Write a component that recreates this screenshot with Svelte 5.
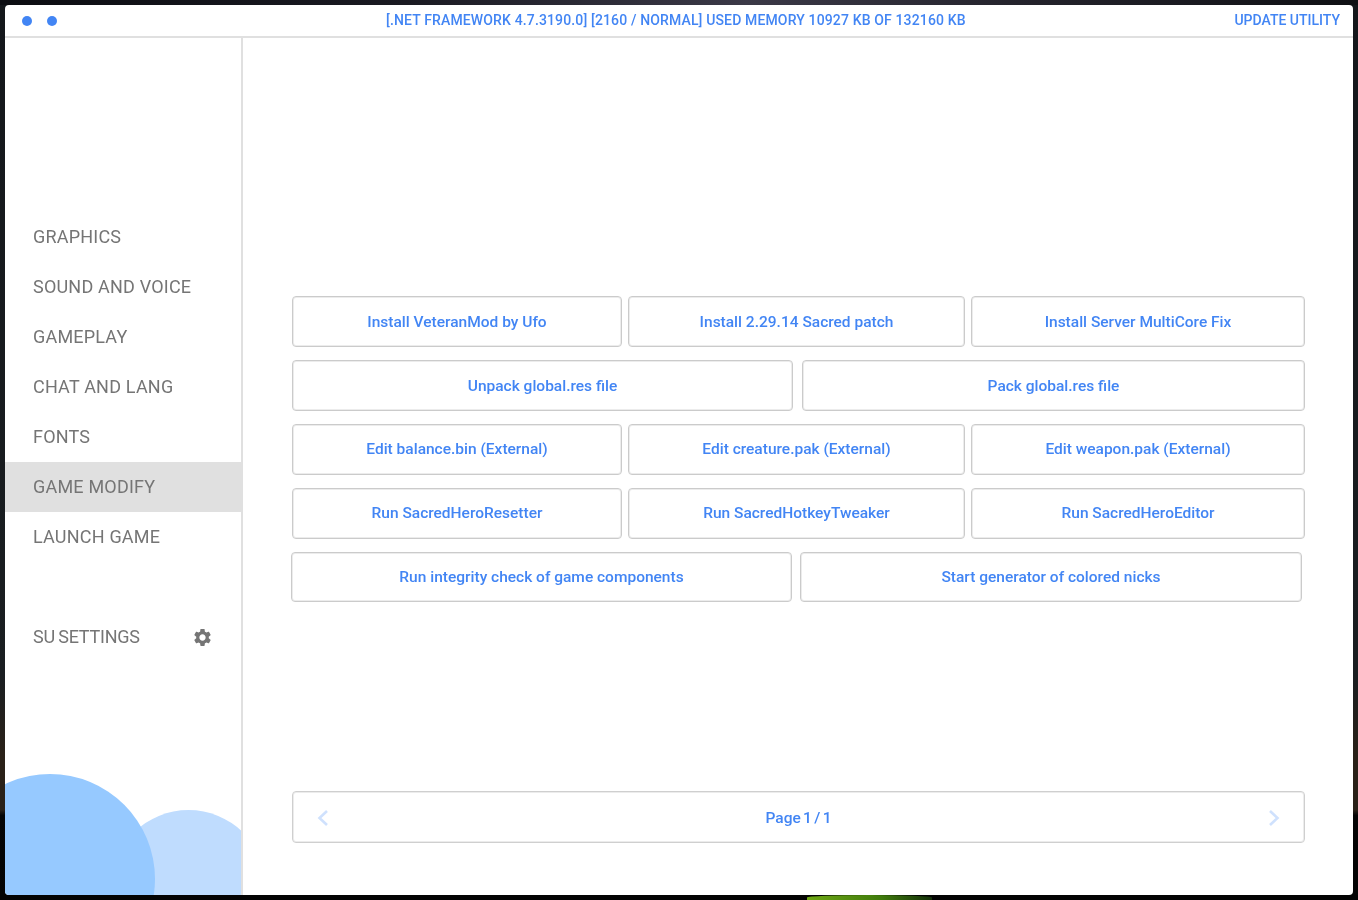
<script>
  const nav = ['GRAPHICS', 'SOUND AND VOICE', 'GAMEPLAY', 'CHAT AND LANG', 'FONTS', 'GAME MODIFY', 'LAUNCH GAME'];
  const rows = [
    { cls: 'three', items: ['Install VeteranMod by Ufo', 'Install 2.29.14 Sacred patch', 'Install Server MultiCore Fix'] },
    { cls: 'two', items: ['Unpack global.res file', 'Pack global.res file'] },
    { cls: 'three lift', items: ['Edit balance.bin (External)', 'Edit creature.pak (External)', 'Edit weapon.pak (External)'] },
    { cls: 'three lift', items: ['Run SacredHeroResetter', 'Run SacredHotkeyTweaker', 'Run SacredHeroEditor'] },
    { cls: 'two last', items: ['Run integrity check of game components', 'Start generator of colored nicks'] }
  ];
</script>

<div class="backdrop" aria-hidden="true"><span class="leaf"></span></div>
<div class="window">
  <header class="bar">
    <div class="dots"><span></span><span></span></div>
    <div class="info">[.NET FRAMEWORK 4.7.3190.0] [2160 / NORMAL] USED MEMORY 10927 KB OF 132160 KB</div>
    <div class="update">UPDATE UTILITY</div>
  </header>
  <div class="body">
    <aside class="side">
      <nav>
        {#each nav as item}
          <div class="item" class:active={item === 'GAME MODIFY'}>{item}</div>
        {/each}
      </nav>
      <div class="item settings">
        <span class="su">SU SETTINGS</span>
        <svg class="gear" width="21" height="21" viewBox="0 0 24 24" fill="#757575"><path fill-rule="evenodd" d="M19.14 12.94c.04-.3.06-.61.06-.94 0-.32-.02-.64-.07-.94l2.03-1.58c.18-.14.23-.41.12-.61l-1.92-3.32c-.12-.22-.37-.29-.59-.22l-2.39.96c-.5-.38-1.03-.7-1.62-.94L14.4 2.81c-.04-.24-.24-.41-.48-.41h-3.84c-.24 0-.43.17-.47.41L9.25 5.35c-.59.24-1.13.57-1.62.94l-2.39-.96c-.22-.08-.47 0-.59.22L2.74 8.87c-.12.21-.08.47.12.61l2.03 1.58c-.05.3-.09.63-.09.94s.02.64.07.94l-2.03 1.58c-.18.14-.23.41-.12.61l1.92 3.32c.12.22.37.29.59.22l2.39-.96c.5.38 1.03.7 1.62.94l.36 2.54c.05.24.24.41.48.41h3.84c.24 0 .44-.17.47-.41l.36-2.54c.59-.24 1.13-.56 1.62-.94l2.39.96c.22.08.47 0 .59-.22l1.92-3.32c.12-.22.07-.47-.12-.61l-2.01-1.58zM12 15.6c-1.98 0-3.6-1.62-3.6-3.6s1.62-3.6 3.6-3.6 3.6 1.62 3.6 3.6-1.62 3.6-3.6 3.6z"/></svg>
      </div>
      <div class="circle small"></div>
      <div class="circle big"></div>
    </aside>
    <main class="main">
      {#each rows as row}
        <div class="row {row.cls}">
          {#each row.items as label}
            <button class="btn">{label}</button>
          {/each}
        </div>
      {/each}
      <div class="pager">
        <svg width="14" height="18" viewBox="0 0 14 18" fill="none" stroke="#cfe1fd" stroke-width="2.6"><path d="M11 2 3.5 9l7.5 7"/></svg>
        <span class="page">Page 1 / 1</span>
        <svg width="14" height="18" viewBox="0 0 14 18" fill="none" stroke="#cfe1fd" stroke-width="2.6"><path d="M3 2l7.5 7L3 16"/></svg>
      </div>
    </main>
  </div>
</div>

<style>
  :global(body) {
    margin: 0;
    background: #050506;
    font-family: Roboto, "Liberation Sans", sans-serif;
  }
  .backdrop {
    position: fixed;
    inset: 0;
    background:
      linear-gradient(90deg, #0c0d12 0%, #1a1a22 30%, #3b3947 55%, #24232c 75%, #0f1014 100%) top / 100% 5px no-repeat,
      linear-gradient(180deg, #14171b 0%, #1a1e21 75%, #2a2118 84%, #2a2118 90%, #050505 90.6%, #030303 100%);
  }
  .leaf {
    position: absolute;
    left: 807px;
    bottom: 0;
    width: 125px;
    height: 5px;
    background: linear-gradient(90deg, #6fa814, #3f7a0c 60%, #14300a);
    border-radius: 60% 60% 0 0;
  }
  .window {
    position: relative;
    margin: 5px;
    width: 1348px;
    height: 890px;
    background: #fff;
    border-radius: 4px;
    overflow: hidden;
    display: flex;
    flex-direction: column;
    box-sizing: border-box;
  }
  .bar {
    flex: none;
    height: 33px;
    box-sizing: border-box;
    border-bottom: 2px solid #e0e0e0;
    display: grid;
    grid-template-columns: 381px 1fr auto;
    align-items: center;
    padding-right: 13px;
    color: #4285f4;
    font-size: 14px;
    font-weight: 500;
  }
  .info {
    letter-spacing: 0.14px;
    padding-bottom: 2px;
  }
  .update {
    padding-bottom: 2px;
  }
  .dots {
    display: flex;
    gap: 15px;
    padding-left: 17px;
  }
  .dots span {
    width: 10px;
    height: 10px;
    border-radius: 50%;
    background: #4285f4;
  }
  .body {
    flex: 1;
    display: flex;
    min-height: 0;
  }
  .side {
    position: relative;
    flex: none;
    width: 238px;
    box-sizing: border-box;
    border-right: 2px solid #e0e0e0;
    padding-top: 174px;
    overflow: hidden;
  }
  .item {
    height: 50px;
    display: flex;
    align-items: center;
    padding: 0 0 2px 28px;
    box-sizing: border-box;
    color: #757575;
    font-size: 18px;
    letter-spacing: 0.2px;
  }
  .item.active {
    background: #e0e0e0;
  }
  .settings {
    margin-top: 50px;
    justify-content: space-between;
    padding-right: 28px;
  }
  .su {
    letter-spacing: -0.22px;
    word-spacing: -1px;
  }
  .gear {
    margin-top: 2px;
  }
  .circle {
    position: absolute;
    border-radius: 50%;
  }
  .big {
    width: 210px;
    height: 210px;
    left: -60px;
    top: 736px;
    background: #96c9ff;
  }
  .small {
    width: 155px;
    height: 155px;
    left: 106px;
    top: 772px;
    background: #bfdcfe;
  }
  .main {
    flex: 1;
    padding: 258px 0 0 49px;
    box-sizing: border-box;
  }
  .row {
    display: grid;
    width: 1013px;
    height: 51px;
    margin-bottom: 13px;
  }
  .three {
    grid-template-columns: 330px 337px 334px;
    column-gap: 6px;
  }
  .two {
    grid-template-columns: 501px 503px;
    column-gap: 9px;
  }
  .last {
    grid-template-columns: 501px 502px;
    column-gap: 8px;
    margin-left: -1px;
    height: 50px;
  }
  .btn {
    background: #fff;
    border: 1px solid #cbcbcb;
    box-shadow: inset 0 0 0 1px #ececec;
    border-radius: 4px;
    color: #4285f4;
    font: inherit;
    font-size: 15.5px;
    font-weight: 500;
    padding: 0;
  }
  .lift .btn {
    padding-bottom: 2px;
  }
  .pager {
    margin-top: 189px;
    width: 1013px;
    height: 52px;
    box-sizing: border-box;
    border: 1px solid #cfcfcf;
    box-shadow: inset 0 0 0 1px #ececec;
    border-radius: 4px;
    display: flex;
    align-items: center;
    justify-content: space-between;
    padding: 2px 23px 0;
    color: #4285f4;
    font-size: 15.5px;
    font-weight: 500;
  }
  .page {
    word-spacing: -1.5px;
  }
</style>
